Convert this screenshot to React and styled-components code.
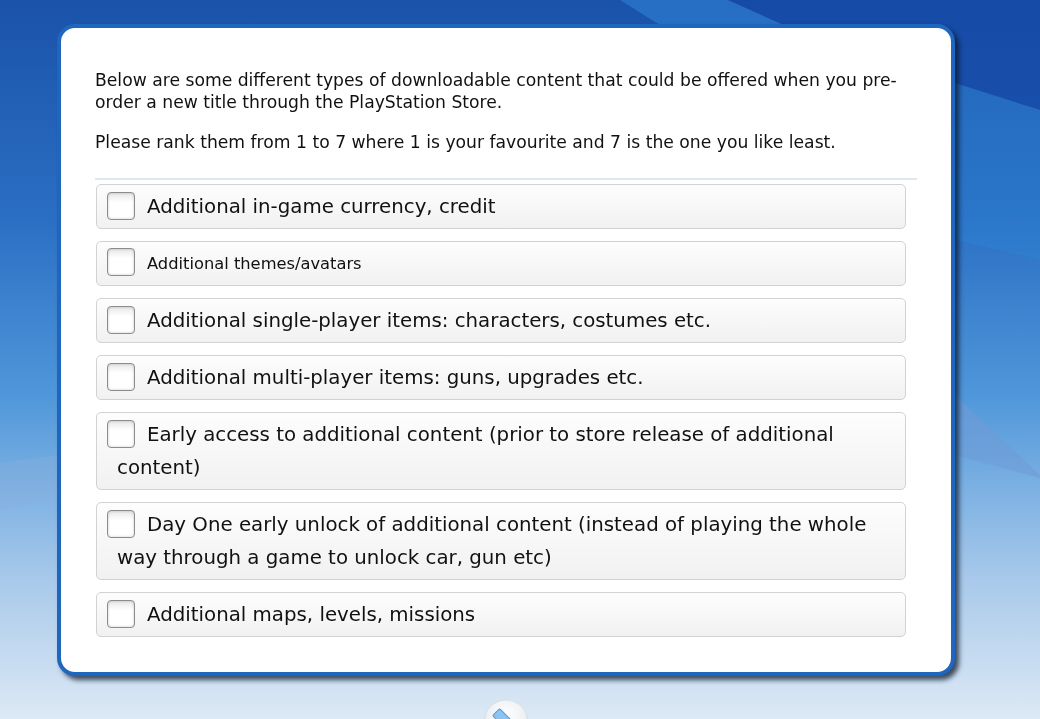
import React from 'react';
import styled, { createGlobalStyle } from 'styled-components';

const items = [
  { text: 'Additional in-game currency, credit' },
  { text: 'Additional themes/avatars', small: true },
  { text: 'Additional single-player items: characters, costumes etc.' },
  { text: 'Additional multi-player items: guns, upgrades etc.' },
  { text: 'Early access to additional content (prior to store release of additional content)' },
  { text: 'Day One early unlock of additional content (instead of playing the whole way through a game to unlock car, gun etc)' },
  { text: 'Additional maps, levels, missions' },
];

function Backdrop() {
  return (
    <Waves viewBox="0 0 1040 719" preserveAspectRatio="none">
      <defs>
        <linearGradient id="sky" x1="0" y1="0" x2="0" y2="1">
          <stop offset="0" stopColor="#1a53a9" />
          <stop offset="0.3" stopColor="#2a6ec3" />
          <stop offset="0.55" stopColor="#4f97da" />
          <stop offset="0.8" stopColor="#a6c8ea" />
          <stop offset="1" stopColor="#dde9f5" />
        </linearGradient>
      </defs>
      <rect width="1040" height="719" fill="url(#sky)" />
      <path d="M620 0 L728 0 L840 50 L700 50 Z" fill="#2c7ad0" opacity="0.7" />
      <path d="M728 0 L1040 0 L1040 110 L955 83 L840 50 Z" fill="#1647a6" opacity="0.7" />
      <path d="M955 83 L1040 110 L1040 260 L955 240 Z" fill="#2e86d8" opacity="0.35" />
      <path d="M955 395 L1040 475 L1040 478 L955 455 Z" fill="#6f9bd6" opacity="0.55" />
      <path d="M0 463 L57 455 L57 497 L0 510 Z" fill="#8aaedc" opacity="0.35" />
    </Waves>
  );
}

function Pencil() {
  return (
    <svg width="46" height="46" viewBox="0 0 46 46">
      <defs>
        <radialGradient id="knob" cx="0.5" cy="0.35" r="0.6">
          <stop offset="0" stopColor="#ffffff" />
          <stop offset="0.7" stopColor="#eef1f4" />
          <stop offset="1" stopColor="#cfd6dd" />
        </radialGradient>
      </defs>
      <circle cx="23" cy="23" r="22" fill="url(#knob)" stroke="#d6dde4" />
      <g transform="rotate(-45 23 23)">
        <rect x="18" y="9" width="10" height="28" rx="1.5" fill="#8cc3ef" stroke="#5a9ad6" />
      </g>
    </svg>
  );
}

export default function App() {
  return (
    <>
      <Global />
      <Backdrop />
      <Page>
        <Card>
          <Intro>
            Below are some different types of downloadable content that could be offered when you pre-order a new title through the PlayStation Store.
          </Intro>
          <Intro>
            Please rank them from 1 to 7 where 1 is your favourite and 7 is the one you like least.
          </Intro>
          <Rule />
          <List>
            {items.map(item => (
              <Item key={item.text} small={item.small}>
                <Box />
                {item.text}
              </Item>
            ))}
          </List>
        </Card>
        <Knob>
          <Pencil />
        </Knob>
      </Page>
    </>
  );
}

const Global = createGlobalStyle`
  html, body {
    margin: 0;
    height: 100%;
    overflow: hidden;
  }
  body {
    font-family: "DejaVu Sans", Verdana, sans-serif;
    color: #111;
  }
`
const Waves = styled.svg`
  position: fixed;
  left: 0;
  top: 0;
  width: 100%;
  height: 100%;
  z-index: 0;
`
const Page = styled.div`
  position: relative;
  z-index: 1;
  padding: 24px 0 0 57px;
  width: 898px;
  display: flex;
  flex-direction: column;
  align-items: center;
`
const Card = styled.div`
  box-sizing: border-box;
  width: 898px;
  height: 652px;
  background: #fff;
  border: 4px solid #1f66bf;
  border-radius: 18px;
  box-shadow: 4px 4px 5px rgba(12, 24, 45, 0.75);
  padding: 41px 34px 0 34px;
  align-self: stretch;
`
const Intro = styled.p`
  margin: 0 0 18px;
  font-size: 17.2px;
  line-height: 22px;
`
const Rule = styled.div`
  height: 2px;
  background: #dfe7f0;
  margin: 25px 0 4px;
  width: 822px;
`
const List = styled.div`
  display: flex;
  flex-direction: column;
  gap: 12px;
  width: 810px;
  margin-left: 1px;
`
const Item = styled.div`
  border: 1px solid #d2d2d2;
  border-radius: 5px;
  background: linear-gradient(#fdfdfd, #f1f1f1);
  padding: 5px 20px 5px 20px;
  text-indent: -10px;
  font-size: ${p => (p.small ? '16.3px' : '19.8px')};
  line-height: 33px;
`
const Box = styled.span`
  display: inline-block;
  box-sizing: border-box;
  width: 28px;
  height: 28px;
  margin-right: 12px;
  vertical-align: -7px;
  border: 1.5px solid #8c8c8c;
  border-radius: 4px;
  background: linear-gradient(#e8e8e8, #ffffff 35%, #ffffff);
  box-shadow: inset 0 0 3px rgba(0, 0, 0, 0.2);
`
const Knob = styled.div`
  margin-top: 23px;
  line-height: 0;
`
